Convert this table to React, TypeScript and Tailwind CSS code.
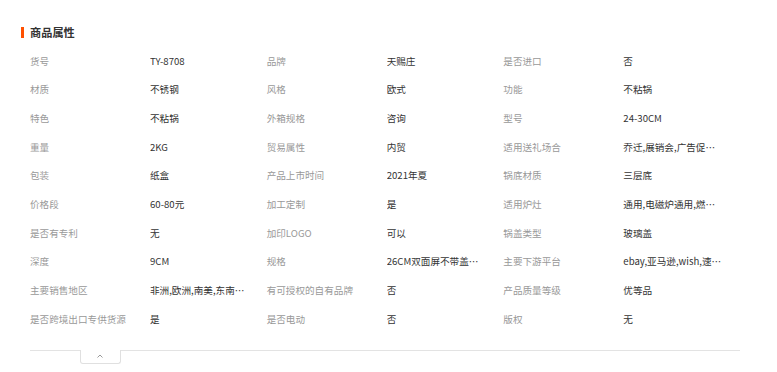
import React from 'react';

// 商品属性：三列，每格 标签 + 值
const SHUXING: [string, string][] = [
  ['货号', 'TY-8708'],
  ['品牌', '天赐庄'],
  ['是否进口', '否'],
  ['材质', '不锈钢'],
  ['风格', '欧式'],
  ['功能', '不粘锅'],
  ['特色', '不粘锅'],
  ['外箱规格', '咨询'],
  ['型号', '24-30CM'],
  ['重量', '2KG'],
  ['贸易属性', '内贸'],
  ['适用送礼场合', '乔迁,展销会,广告促销,商务礼品'],
  ['包装', '纸盒'],
  ['产品上市时间', '2021年夏'],
  ['锅底材质', '三层底'],
  ['价格段', '60-80元'],
  ['加工定制', '是'],
  ['适用炉灶', '通用,电磁炉通用,燃气灶通用'],
  ['是否有专利', '无'],
  ['加印LOGO', '可以'],
  ['锅盖类型', '玻璃盖'],
  ['深度', '9CM'],
  ['规格', '26CM双面屏不带盖【礼盒装】'],
  ['主要下游平台', 'ebay,亚马逊,wish,速卖通'],
  ['主要销售地区', '非洲,欧洲,南美,东南亚,北美'],
  ['有可授权的自有品牌', '否'],
  ['产品质量等级', '优等品'],
  ['是否跨境出口专供货源', '是'],
  ['是否电动', '否'],
  ['版权', '无'],
];

export default function App() {
  return (
    <div
      className="w-[777px] h-[372px] bg-white pl-[21px] pt-[27px] overflow-hidden"
      style={{ fontFamily: '"Noto Sans CJK SC", "Liberation Sans", sans-serif' }}
    >
      {/* 标题 */}
      <div className="flex items-center gap-[6px] h-[11px]">
        <span className="w-[3px] h-[11px] bg-[#ff5000]" />
        <h2 className="text-[11.2px] leading-[11px] font-bold text-[#333]">商品属性</h2>
      </div>

      <div className="ml-[9px] w-[710px]">
        {/* 属性表格 */}
        <div className="grid grid-cols-3 mt-[8.7px]">
          {SHUXING.map(([label, value]) => (
            <div key={label} className="flex items-center h-[28.67px] text-[9.6px]">
              <span className="w-[120px] shrink-0 text-[#999] whitespace-nowrap">{label}</span>
              <span className="w-[100px] truncate text-[#333]">{value}</span>
            </div>
          ))}
        </div>

        {/* 分隔线 + 收起按钮 */}
        <div className="mt-[16.5px] border-t border-[#e3e3e3]" />
        <div className="-mt-px ml-[49.5px] w-[41px] h-[14px] bg-white border border-t-0 border-[#e0e0e0] rounded-b-[3px] flex items-center justify-center">
          <svg width="6" height="4" viewBox="0 0 6 4" className="-mt-[1px]">
            <polyline points="0.5,3.5 3,1 5.5,3.5" fill="none" stroke="#999" strokeWidth="1" />
          </svg>
        </div>
      </div>
    </div>
  );
}
